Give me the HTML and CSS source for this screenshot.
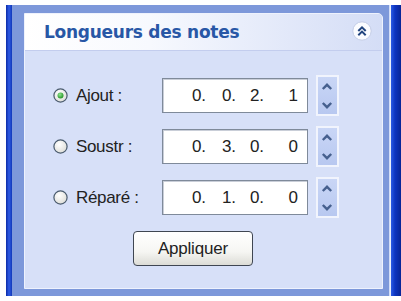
FILE: index.html
```html
<!DOCTYPE html>
<html lang="fr">
<head>
<meta charset="utf-8">
<title>Longueurs des notes</title>
<link rel="stylesheet" href="styles.css">
</head>
<body>
<div class="frame">
  <div class="lbar"></div>
  <div class="outer">
    <div class="panel">
      <div class="header">
        <span class="title">Longueurs des notes</span>
        <span class="collapse">
          <svg width="20" height="20" viewBox="0 0 20 20"><circle cx="10" cy="10" r="9.2" fill="#fbfcff" stroke="#c4cde6" stroke-width="1"/><path d="M6.3 10 L10 6.4 L13.7 10 M6.3 14.2 L10 10.6 L13.7 14.2" fill="none" stroke="#22457e" stroke-width="2"/></svg>
        </span>
      </div>
      <div class="body">
        <div class="row">
          <span class="radio"><svg width="15" height="15" viewBox="0 0 15 15"><defs><radialGradient id="rg1" cx="0.4" cy="0.35" r="0.7"><stop offset="0" stop-color="#ffffff"/><stop offset="1" stop-color="#dcdcd6"/></radialGradient><radialGradient id="gd" cx="0.4" cy="0.35" r="0.6"><stop offset="0" stop-color="#8ee48e"/><stop offset="1" stop-color="#2f9a2f"/></radialGradient></defs><circle cx="7.5" cy="7.5" r="6.6" fill="url(#rg1)" stroke="#4a5b6e" stroke-width="1.2"/><circle cx="7.5" cy="7.5" r="3" fill="url(#gd)"/></svg></span>
          <span class="label">Ajout :</span>
          <span class="field"><span class="d1">0.</span><span class="d2">0.</span><span class="d3">2.</span><span class="d4">1</span></span>
          <span class="spin"><svg width="12" height="32" viewBox="0 0 12 32"><path d="M1.8 9 L6 4.8 L10.2 9 M1.8 23 L6 27.2 L10.2 23" fill="none" stroke="#46608e" stroke-width="2.4"/></svg></span>
        </div>
        <div class="row">
          <span class="radio"><svg width="15" height="15" viewBox="0 0 15 15"><defs><radialGradient id="rg2" cx="0.4" cy="0.35" r="0.7"><stop offset="0" stop-color="#ffffff"/><stop offset="1" stop-color="#dcdcd6"/></radialGradient></defs><circle cx="7.5" cy="7.5" r="6.6" fill="url(#rg2)" stroke="#4a5b6e" stroke-width="1.2"/></svg></span>
          <span class="label">Soustr :</span>
          <span class="field"><span class="d1">0.</span><span class="d2">3.</span><span class="d3">0.</span><span class="d4">0</span></span>
          <span class="spin"><svg width="12" height="32" viewBox="0 0 12 32"><path d="M1.8 9 L6 4.8 L10.2 9 M1.8 23 L6 27.2 L10.2 23" fill="none" stroke="#46608e" stroke-width="2.4"/></svg></span>
        </div>
        <div class="row">
          <span class="radio"><svg width="15" height="15" viewBox="0 0 15 15"><defs><radialGradient id="rg3" cx="0.4" cy="0.35" r="0.7"><stop offset="0" stop-color="#ffffff"/><stop offset="1" stop-color="#dcdcd6"/></radialGradient></defs><circle cx="7.5" cy="7.5" r="6.6" fill="url(#rg3)" stroke="#4a5b6e" stroke-width="1.2"/></svg></span>
          <span class="label">Réparé :</span>
          <span class="field"><span class="d1">0.</span><span class="d2">1.</span><span class="d3">0.</span><span class="d4">0</span></span>
          <span class="spin"><svg width="12" height="32" viewBox="0 0 12 32"><path d="M1.8 9 L6 4.8 L10.2 9 M1.8 23 L6 27.2 L10.2 23" fill="none" stroke="#46608e" stroke-width="2.4"/></svg></span>
        </div>
        <div class="actions">
          <button class="apply" type="button">Appliquer</button>
        </div>
      </div>
    </div>
  </div>
  <div class="gap"></div>
  <div class="rbar"></div>
</div>
</body>
</html>
```

FILE: styles.css
```css
html, body {
  margin: 0;
  padding: 0;
  background: #ffffff;
}
body {
  width: 401px;
  height: 301px;
  overflow: hidden;
  font-family: "Liberation Sans", Arial, sans-serif;
}
.frame {
  display: flex;
  margin-top: 5px;
  height: 291px;
}
.lbar {
  margin-left: 6px;
  width: 6px;
  background: linear-gradient(to right, #0b2aa6, #2d5be6 50%, #1238b8);
}
.outer {
  width: 365px;
  padding: 8px 6px 7px 12px;
  background: #7d98da;
}
.gap {
  width: 2px;
  background: linear-gradient(to right, #c7d4f3, #f4f7fe);
}
.rbar {
  width: 10px;
  background: linear-gradient(to right, #2a5ae3, #0d34c0 40%, #082595);
}
.panel {
  width: 357px;
  height: 274px;
  border: 1px solid #eef2fd;
  border-top-right-radius: 5px;
  background: #d7e0f8;
  display: flex;
  flex-direction: column;
}
.header {
  height: 36px;
  border-bottom: 1px solid #c3cdee;
  border-top-right-radius: 4px;
  background: linear-gradient(to right, #ffffff 0%, #f7f9fe 35%, #d4ddf6 100%);
  display: flex;
  align-items: center;
  justify-content: space-between;
  padding: 0 10px 0 19px;
}
.title {
  font-family: "DejaVu Sans", Verdana, sans-serif;
  font-weight: bold;
  font-size: 17px;
  color: #2857a6;
  letter-spacing: -0.25px;
  margin-top: -1px;
}
.collapse {
  display: flex;
  margin-top: -2px;
}
.body {
  flex: 1;
  padding: 27px 0 0 28px;
  display: flex;
  flex-direction: column;
  gap: 16px;
}
.row {
  display: flex;
  align-items: center;
  height: 35px;
}
.radio {
  display: flex;
  width: 23px;
}
.label {
  width: 86px;
  font-size: 17px;
  color: #222222;
  letter-spacing: -0.3px;
}
.field {
  box-sizing: border-box;
  width: 146px;
  height: 35px;
  background: #ffffff;
  border: 1px solid #7f8a9a;
  box-shadow: inset 1px 1px 0 #c9ced8;
  display: flex;
  align-items: center;
  font-size: 17px;
  color: #222222;
  padding-left: 29px;
}
.d1 { width: 30px; }
.d2 { width: 28px; }
.d3 { flex: 1; }
.d4 { padding-right: 9px; }
.spin {
  box-sizing: border-box;
  margin-left: 8px;
  width: 23px;
  height: 41px;
  border: 2px solid #f1f4fd;
  background: linear-gradient(to bottom, #c9d6f6, #b8c8f0);
  display: flex;
  align-items: center;
  justify-content: center;
}
.actions {
  display: flex;
  padding-left: 80px;
}
.apply {
  box-sizing: border-box;
  width: 120px;
  height: 35px;
  border: 1px solid #3f4652;
  border-radius: 4px;
  background: linear-gradient(to bottom, #ffffff 0%, #f6f6f3 60%, #dcdcd6 100%);
  font-family: "Liberation Sans", Arial, sans-serif;
  font-size: 17px;
  color: #222222;
  padding: 0;
  letter-spacing: -0.2px;
}
```
